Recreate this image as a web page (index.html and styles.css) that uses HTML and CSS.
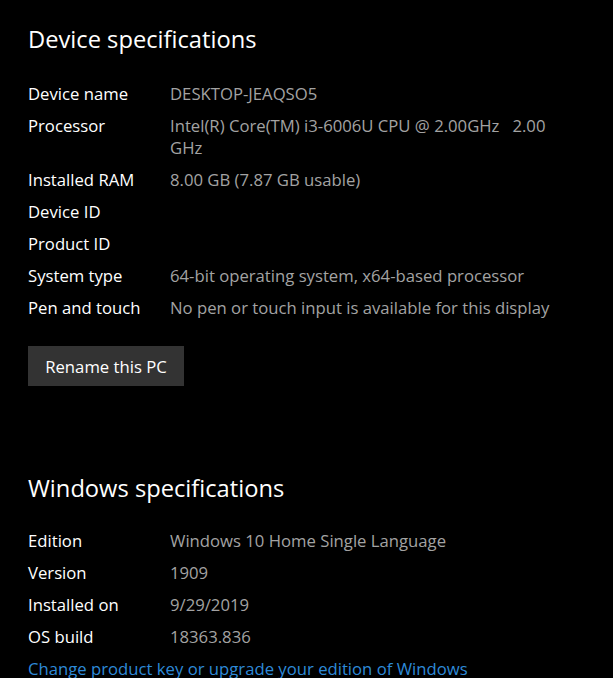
FILE: index.html
```html
<!DOCTYPE html>
<html lang="en">
<head>
<meta charset="utf-8">
<title>About</title>
<link rel="stylesheet" href="styles.css">
</head>
<body>
<main class="page">
  <section class="section">
    <h2 class="heading">Device specifications</h2>
    <dl class="specs">
      <dt>Device name</dt><dd>DESKTOP-JEAQSO5</dd>
      <dt>Processor</dt><dd class="pre">Intel(R) Core(TM) i3-6006U CPU @ 2.00GHz   2.00 GHz</dd>
      <dt>Installed RAM</dt><dd>8.00 GB (7.87 GB usable)</dd>
      <dt>Device ID</dt><dd></dd>
      <dt>Product ID</dt><dd></dd>
      <dt>System type</dt><dd>64-bit operating system, x64-based processor</dd>
      <dt>Pen and touch</dt><dd>No pen or touch input is available for this display</dd>
    </dl>
    <button class="btn" type="button">Rename this PC</button>
  </section>
  <section class="section second">
    <h2 class="heading">Windows specifications</h2>
    <dl class="specs">
      <dt>Edition</dt><dd>Windows 10 Home Single Language</dd>
      <dt>Version</dt><dd>1909</dd>
      <dt>Installed on</dt><dd>9/29/2019</dd>
      <dt>OS build</dt><dd>18363.836</dd>
    </dl>
    <a class="link" href="#">Change product key or upgrade your edition of Windows</a>
  </section>
</main>
</body>
</html>
```
FILE: styles.css
```css
html, body {
  margin: 0;
  padding: 0;
  background: #000;
}
body {
  font-family: "Open Sans", "Noto Sans", sans-serif;
  color: #fff;
  width: 613px;
  height: 678px;
  overflow: hidden;
}
.page {
  padding: 21px 0 0 28px;
}
.heading {
  margin: 0;
  font-weight: 400;
  font-size: 23.7px;
  line-height: 36px;
}
.specs {
  margin: 26px 0 0;
  display: grid;
  grid-template-columns: 142px 392px;
  row-gap: 10px;
  font-size: 16.7px;
  line-height: 22px;
}
.second .specs {
  margin-top: 24px;
}
.specs dt, .specs dd {
  margin: 0;
  min-height: 22px;
}
.specs dd {
  color: #a3a3a3;
}
.specs .pre {
  white-space: pre-wrap;
}
.btn {
  display: block;
  margin-top: 27px;
  width: 156px;
  height: 40px;
  border: 0;
  background: #333;
  color: #fff;
  font-family: inherit;
  font-size: 16.7px;
  padding: 0;
}
.second {
  margin-top: 84px;
}
.link {
  display: block;
  margin-top: 10px;
  color: #2e8ad8;
  text-decoration: none;
  font-size: 16.7px;
  line-height: 22px;
}
```
